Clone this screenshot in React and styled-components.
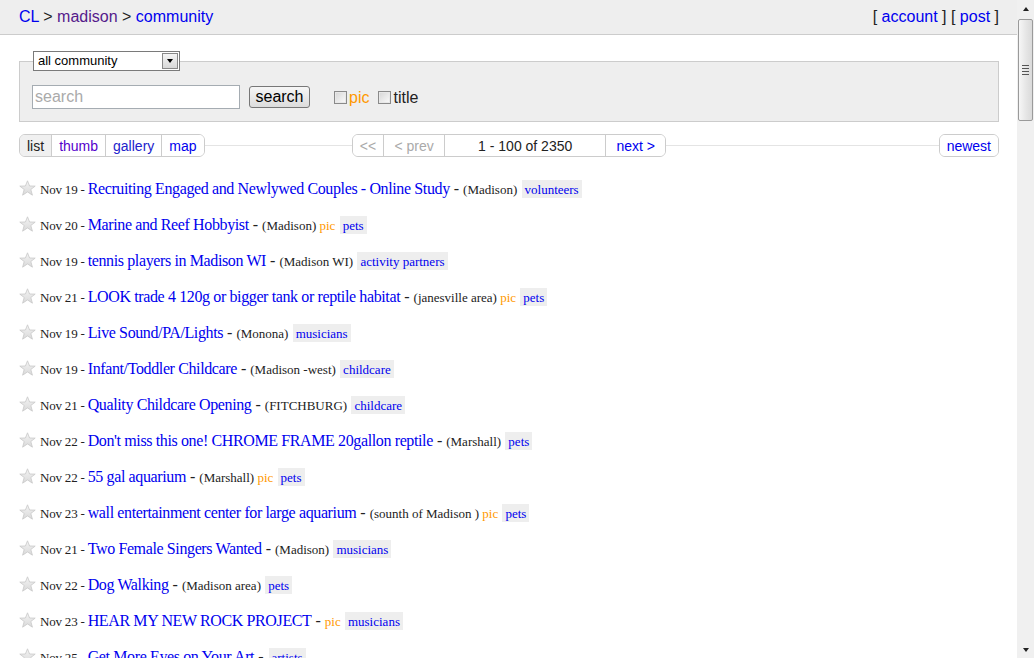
import React from "react";
import styled, { createGlobalStyle } from "styled-components";

const Global = createGlobalStyle`
  html, body { margin: 0; padding: 0; background: #fff; }
  body { font-family: "Liberation Sans", Arial, sans-serif; overflow: hidden; }
  * { box-sizing: border-box; }
`;

const Frame = styled.div`
  display: flex;
  width: 1034px;
  height: 658px;
  overflow: hidden;
`;

const Main = styled.div`
  flex: 1;
  min-width: 0;
  overflow: hidden;
`;

const Header = styled.header`
  display: flex;
  justify-content: space-between;
  align-items: center;
  height: 35px;
  padding: 0 18px 1px 19px;
  background: #eee;
  border-bottom: 1px solid #ccc;
  font-size: 16px;
  color: #222;
`;

const Link = styled.a`
  color: ${(p) => (p.$visited ? "#551a8b" : "#00e")};
  text-decoration: none;
`;

const Content = styled.div`
  padding: 16px 18px 0 19px;
`;

const Fieldset = styled.fieldset`
  margin: 0;
  padding: 14px 12px 12px 12px;
  border: 1px solid #ccc;
  background: #eee;
  display: flex;
  align-items: center;
`;

const Legend = styled.legend`
  padding: 0;
  margin-left: 1px;
`;

const SelectBox = styled.div`
  display: flex;
  width: 147px;
  height: 20px;
  border: 1px solid #7a7a7a;
  background: #fff;
  font-size: 13px;
  color: #000;
  align-items: stretch;
`;

const SelectText = styled.div`
  flex: 1;
  padding: 0 4px;
  line-height: 18px;
`;

const SelectArrow = styled.div`
  width: 16px;
  margin: 1px;
  border: 1px solid #888;
  background: linear-gradient(#f4f4f4, #d8d8d8);
  display: flex;
  align-items: center;
  justify-content: center;
  &::after {
    content: "";
    border-left: 3.5px solid transparent;
    border-right: 3.5px solid transparent;
    border-top: 4px solid #000;
  }
`;

const SearchInput = styled.input`
  width: 208px;
  height: 24px;
  border: 1px solid #a5acb2;
  padding: 0 2px;
  font-family: "Liberation Sans", Arial, sans-serif;
  font-size: 16px;
  color: #222;
  background: #fff;
  &::placeholder { color: #aaa; }
`;

const SearchButton = styled.button`
  margin-left: 9px;
  width: 61px;
  height: 22px;
  padding: 0;
  border: 1px solid #777;
  border-radius: 3px;
  background: linear-gradient(#f6f6f6, #dcdcdc);
  font-family: "Liberation Sans", Arial, sans-serif;
  font-size: 16px;
  color: #000;
`;

const CheckLabel = styled.label`
  display: flex;
  align-items: center;
  margin-left: ${(p) => p.$gap}px;
  padding-top: 1px;
  font-size: 16px;
  color: ${(p) => p.$color};
`;

const Check = styled.span`
  display: inline-block;
  width: 13px;
  height: 13px;
  margin-right: 2px;
  border: 1px solid #8a8a8a;
  background: linear-gradient(135deg, #d6d6d6, #fbfbfb);
  box-shadow: inset 0 0 0 1px #e8e8e8;
`;

const Toolbar = styled.div`
  margin-top: 12px;
  display: grid;
  grid-template-columns: 1fr auto 1fr;
  align-items: center;
  height: 23px;
`;

const Side = styled.div`
  display: flex;
  align-items: center;
`;

const Rule = styled.div`
  flex: 1;
  height: 1px;
  background: #e4e4e4;
`;

const Group = styled.div`
  display: flex;
  height: 23px;
  border: 1px solid #ccc;
  border-radius: 6px;
  overflow: hidden;
  font-size: 14px;
`;

const Seg = styled.a`
  display: flex;
  align-items: center;
  justify-content: center;
  padding: 0 7px;
  ${(p) => (p.$w ? `width: ${p.$w}px;` : "")}
  background: ${(p) => (p.$active ? "#f0f0f0" : "#fff")};
  color: ${(p) => p.$color || "#00e"};
  text-decoration: none;
  & + & { border-left: 1px solid #ccc; }
`;

const List = styled.div`
  margin-top: 14px;
`;

const Row = styled.p`
  margin: 0;
  height: 36px;
  line-height: 36px;
  white-space: nowrap;
  font-family: "Liberation Serif", "Times New Roman", serif;
  font-size: 16px;
  color: #222;
`;

const StarIcon = styled.svg`
  width: 17px;
  height: 16px;
  vertical-align: -2px;
  margin-right: 4px;
`;

const Small = styled.span`
  font-size: 13px;
  color: #222;
  letter-spacing: ${(p) => (p.$tight ? "-0.2px" : "0")};
`;

const Title = styled.a`
  color: #00e;
  text-decoration: none;
  letter-spacing: -0.38px;
`;

const Pic = styled.span`
  font-size: 13px;
  color: #f90;
`;

const Tag = styled.a`
  display: inline-block;
  margin-left: 1px;
  padding: 2px 3px 0;
  line-height: 16px;
  font-size: 13px;
  background: #eee;
  color: #00e;
  text-decoration: none;
`;

const ScrollTrack = styled.div`
  width: 17px;
  height: 658px;
  background: #f0f0f0;
  display: flex;
  flex-direction: column;
  align-items: center;
`;

const ScrollArrow = styled.div`
  width: 17px;
  height: 17px;
  display: flex;
  align-items: center;
  justify-content: center;
  &::after {
    content: "";
    border-left: 3.5px solid transparent;
    border-right: 3.5px solid transparent;
    ${(p) => (p.$down ? "border-top: 4px solid #222;" : "border-bottom: 4px solid #222;")}
  }
`;

const Thumb = styled.div`
  width: 15px;
  height: 102px;
  margin-top: 2px;
  border: 1px solid #9a9a9a;
  border-radius: 2px;
  background: linear-gradient(to right, #f6f6f6, #e4e4e4 60%, #dadada);
  display: flex;
  flex-direction: column;
  align-items: center;
  justify-content: center;
  gap: 2px;
`;

const Grip = styled.span`
  width: 7px;
  height: 1px;
  background: #555;
`;

const Spacer = styled.div`
  flex: 1;
`;

function Star() {
  return (
    <StarIcon viewBox="0 0 17 16">
      <defs>
        <linearGradient id="sg" x1="0" y1="0" x2="0" y2="1">
          <stop offset="0" stopColor="#f4f4f4" />
          <stop offset="1" stopColor="#d9d9d9" />
        </linearGradient>
      </defs>
      <path
        d="M8.5 0.8 L10.6 6 L16.2 6.1 L11.8 9.5 L13.4 15.2 L8.5 11.9 L3.6 15.2 L5.2 9.5 L0.8 6.1 L6.4 6 Z"
        fill="url(#sg)"
        stroke="#c8c8c8"
        strokeWidth="0.8"
      />
    </StarIcon>
  );
}

const rows = [
  ["Nov 19", "Recruiting Engaged and Newlywed Couples - Online Study", "(Madison)", false, "volunteers"],
  ["Nov 20", "Marine and Reef Hobbyist", "(Madison)", true, "pets"],
  ["Nov 19", "tennis players in Madison WI", "(Madison WI)", false, "activity partners"],
  ["Nov 21", "LOOK trade 4 120g or bigger tank or reptile habitat", "(janesville area)", true, "pets"],
  ["Nov 19", "Live Sound/PA/Lights", "(Monona)", false, "musicians"],
  ["Nov 19", "Infant/Toddler Childcare", "(Madison -west)", false, "childcare"],
  ["Nov 21", "Quality Childcare Opening", "(FITCHBURG)", false, "childcare"],
  ["Nov 22", "Don't miss this one! CHROME FRAME 20gallon reptile", "(Marshall)", false, "pets"],
  ["Nov 22", "55 gal aquarium", "(Marshall)", true, "pets"],
  ["Nov 23", "wall entertainment center for large aquarium", "(sounth of Madison )", true, "pets"],
  ["Nov 21", "Two Female Singers Wanted", "(Madison)", false, "musicians"],
  ["Nov 22", "Dog Walking", "(Madison area)", false, "pets"],
  ["Nov 23", "HEAR MY NEW ROCK PROJECT", "", true, "musicians"],
  ["Nov 25", "Get More Eyes on Your Art", "", false, "artists"],
];

export default function App() {
  return (
    <>
      <Global />
      <Frame>
        <Main>
          <Header>
            <div>
              <Link href="#">CL</Link> &gt; <Link href="#" $visited>madison</Link> &gt;{" "}
              <Link href="#">community</Link>
            </div>
            <div>
              [ <Link href="#">account</Link> ] [ <Link href="#">post</Link> ]
            </div>
          </Header>
          <Content>
            <Fieldset>
              <Legend>
                <SelectBox>
                  <SelectText>all community</SelectText>
                  <SelectArrow />
                </SelectBox>
              </Legend>
              <SearchInput placeholder="search" />
              <SearchButton>search</SearchButton>
              <CheckLabel $gap={24} $color="#f90">
                <Check />
                pic
              </CheckLabel>
              <CheckLabel $gap={9} $color="#222">
                <Check />
                title
              </CheckLabel>
            </Fieldset>

            <Toolbar>
              <Side>
                <Group>
                  <Seg $active $color="#222">list</Seg>
                  <Seg href="#" $color="#50c">thumb</Seg>
                  <Seg href="#" $color="#22c">gallery</Seg>
                  <Seg href="#">map</Seg>
                </Group>
                <Rule />
              </Side>
              <Group>
                <Seg $color="#aaa">&lt;&lt;</Seg>
                <Seg $color="#aaa" $w={61}>&lt; prev</Seg>
                <Seg $color="#222" $w={161}>1 - 100 of 2350</Seg>
                <Seg href="#" $w={60}>next &gt;</Seg>
              </Group>
              <Side>
                <Rule />
                <Group>
                  <Seg href="#">newest</Seg>
                </Group>
              </Side>
            </Toolbar>

            <List>
              {rows.map(([date, title, loc, pic, tag], i) => (
                <Row key={i}>
                  <Star />
                  <Small $tight>{date} - </Small>
                  <Title href="#">{title}</Title> -{" "}
                  {loc && <Small>{loc} </Small>}
                  {pic && <Pic>pic </Pic>}
                  <Tag href="#">{tag}</Tag>
                </Row>
              ))}
            </List>
          </Content>
        </Main>
        <ScrollTrack>
          <ScrollArrow />
          <Thumb>
            <Grip />
            <Grip />
            <Grip />
            <Grip />
          </Thumb>
          <Spacer />
          <ScrollArrow $down />
        </ScrollTrack>
      </Frame>
    </>
  );
}
